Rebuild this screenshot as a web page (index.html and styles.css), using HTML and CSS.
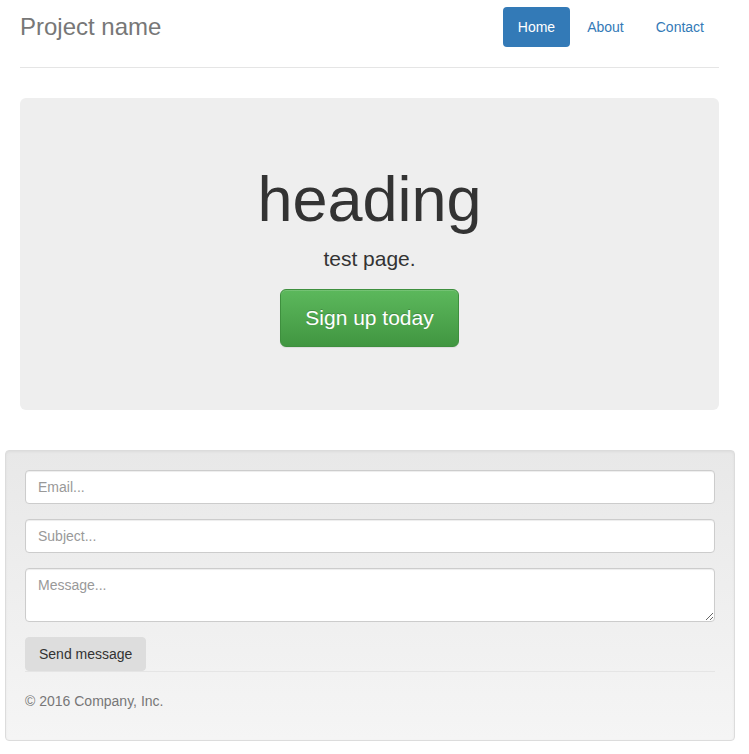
FILE: index.html
```html
<!DOCTYPE html>
<html lang="en">
<head>
<meta charset="utf-8">
<title>Project name</title>
<link rel="stylesheet" href="styles.css">
</head>
<body>
<div class="container">
  <div class="header">
    <h3 class="brand">Project name</h3>
    <ul class="nav">
      <li><a class="pill active" href="#">Home</a></li>
      <li><a class="pill" href="#">About</a></li>
      <li><a class="pill" href="#">Contact</a></li>
    </ul>
  </div>
  <div class="jumbotron">
    <h1 class="jumbo-title">heading</h1>
    <p class="lead">test page.</p>
    <p class="cta-row"><a class="btn-signup" href="#">Sign up today</a></p>
  </div>
</div>
<div class="well">
  <form class="contact">
    <div class="form-group"><input class="form-control" type="email" placeholder="Email..."></div>
    <div class="form-group"><input class="form-control" type="text" placeholder="Subject..."></div>
    <div class="form-group"><textarea class="form-control textarea" rows="2" placeholder="Message..."></textarea></div>
    <button class="btn-send" type="button">Send message</button>
  </form>
  <footer class="footer">
    <p class="copy">© 2016 Company, Inc.</p>
  </footer>
</div>
</body>
</html>
```
FILE: styles.css
```css
* { box-sizing: border-box; }
html, body { margin: 0; padding: 0; }
body {
  font-family: "Liberation Sans", Arial, Helvetica, sans-serif;
  font-size: 14px;
  line-height: 20px;
  color: #333;
  background: #fff;
  padding-top: 7px;
}
.container {
  margin-left: 20px;
  width: 699px;
}
.header {
  display: flex;
  justify-content: space-between;
  align-items: center;
  padding-bottom: 20px;
  border-bottom: 1px solid #e5e5e5;
}
.brand {
  margin: 0;
  font-size: 24px;
  font-weight: 400;
  line-height: 40px;
  color: #777;
}
.nav {
  display: flex;
  gap: 2px;
  list-style: none;
  margin: 0;
  padding: 0;
}
.pill {
  display: block;
  padding: 10px 15px;
  line-height: 20px;
  border-radius: 4px;
  color: #337ab7;
  text-decoration: none;
}
.pill.active {
  color: #fff;
  background: #337ab7;
}
.jumbotron {
  margin-top: 30px;
  margin-bottom: 40px;
  padding: 48px 60px 48px;
  background: #eee;
  border-radius: 6px;
  text-align: center;
}
.jumbo-title {
  margin: 19px 0 10px;
  font-size: 63px;
  font-weight: 500;
  line-height: 1.1;
  color: #333;
}
.lead {
  margin: 0 0 15px;
  font-size: 21px;
  line-height: 30px;
  font-weight: 400;
}
.cta-row {
  margin: 0 0 15px;
}
.btn-signup {
  display: inline-block;
  padding: 14px 24px;
  font-size: 21px;
  line-height: 28px;
  color: #fff;
  text-decoration: none;
  border: 1px solid #3e8f3e;
  border-radius: 6px;
  background: linear-gradient(to bottom, #5cb85c 0, #419641 100%);
  box-shadow: inset 0 1px 0 rgba(255,255,255,.15), 0 1px 1px rgba(0,0,0,.075);
  text-shadow: 0 -1px 0 rgba(0,0,0,.2);
}
.well {
  margin: 0 14px 0 5px;
  padding: 19px;
  border: 1px solid #dcdcdc;
  border-radius: 4px;
  background: linear-gradient(to bottom, #e8e8e8 0, #f5f5f5 100%);
  box-shadow: inset 0 1px 3px rgba(0,0,0,.05), 0 1px 0 rgba(255,255,255,.1);
}
.contact { margin: 0; }
.form-group { margin-bottom: 15px; }
.form-control {
  display: block;
  width: 100%;
  height: 34px;
  padding: 6px 12px;
  font-family: inherit;
  font-size: 14px;
  line-height: 20px;
  color: #555;
  background: #fff;
  border: 1px solid #ccc;
  border-radius: 4px;
  box-shadow: inset 0 1px 1px rgba(0,0,0,.075);
  margin: 0;
}
.form-control::placeholder { color: #999; }
.textarea {
  height: 54px;
  resize: vertical;
}
.btn-send {
  display: block;
  height: 34px;
  padding: 6px 13px;
  font-family: inherit;
  font-size: 14px;
  line-height: 20px;
  color: #333;
  background: #ddd;
  border: 1px solid #ddd;
  border-radius: 4px;
  margin: 0;
}
.footer {
  padding-top: 19px;
  border-top: 1px solid #e5e5e5;
  color: #777;
}
.copy { margin: 0 0 10px; }
```
